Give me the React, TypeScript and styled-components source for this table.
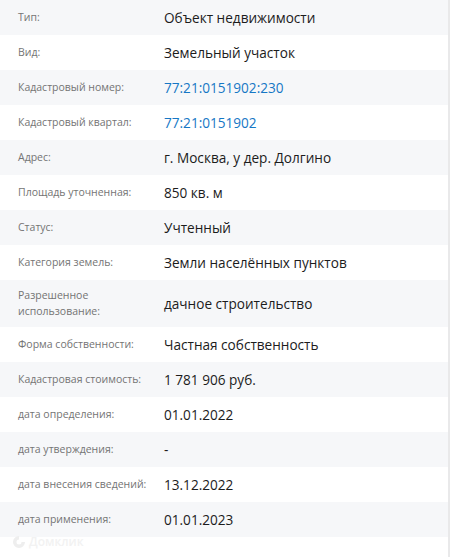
import React from 'react';
import styled, { createGlobalStyle } from 'styled-components';

const GlobalStyle = createGlobalStyle`
    html, body {
        margin: 0;
        padding: 0;
        background: #ffffff;
        font-family: "Open Sans", "Noto Sans", sans-serif;
    }
`;

const Page = styled.div`
    width: 450px;
    height: 557px;
    display: flex;
    overflow: hidden;
    position: relative;
    background: #ffffff;
`;

const Table = styled.div`
    width: 448px;
    display: flex;
    flex-direction: column;
`;

const Edge = styled.div`
    width: 2px;
    background: #e9e9ea;
`;

const Row = styled.div<{ $shaded: boolean; $tall?: boolean }>`
    display: grid;
    grid-template-columns: 164px 1fr;
    align-items: center;
    height: ${p => (p.$tall ? '47px' : '35px')};
    background: ${p => (p.$shaded ? '#f6f7f9' : '#ffffff')};
`;

const Label = styled.div`
    padding-left: 18px;
    padding-right: 8px;
    font-size: 10.5px;
    line-height: 16px;
    color: #747474;
    margin-top: -2px;
`;

const Value = styled.div<{ $link?: boolean }>`
    font-size: 13.6px;
    line-height: 20px;
    color: ${p => (p.$link ? '#1677c5' : '#1c1c1c')};
`;

const Watermark = styled.div`
    position: absolute;
    left: 12px;
    bottom: 7px;
    display: flex;
    align-items: center;
    gap: 3px;
    font-size: 12px;
    font-weight: 600;
    color: #f2f2f2;
`;

interface IField {
    label: string;
    value: string;
    link?: boolean;
    tall?: boolean;
}

const fields: IField[] = [
    { label: 'Тип:', value: 'Объект недвижимости' },
    { label: 'Вид:', value: 'Земельный участок' },
    { label: 'Кадастровый номер:', value: '77:21:0151902:230', link: true },
    { label: 'Кадастровый квартал:', value: '77:21:0151902', link: true },
    { label: 'Адрес:', value: 'г. Москва, у дер. Долгино' },
    { label: 'Площадь уточненная:', value: '850 кв. м' },
    { label: 'Статус:', value: 'Учтенный' },
    { label: 'Категория земель:', value: 'Земли населённых пунктов' },
    { label: 'Разрешенное использование:', value: 'дачное строительство', tall: true },
    { label: 'Форма собственности:', value: 'Частная собственность' },
    { label: 'Кадастровая стоимость:', value: '1 781 906 руб.' },
    { label: 'дата определения:', value: '01.01.2022' },
    { label: 'дата утверждения:', value: '-' },
    { label: 'дата внесения сведений:', value: '13.12.2022' },
    { label: 'дата применения:', value: '01.01.2023' },
];

const App = () => (
    <Page>
        <GlobalStyle />
        <Table>
            {fields.map((f, i) => (
                <Row key={f.label} $shaded={i % 2 === 0} $tall={f.tall}>
                    <Label>{f.label}</Label>
                    <Value $link={f.link}>{f.value}</Value>
                </Row>
            ))}
        </Table>
        <Edge />
        <Watermark>
            <svg width="14" height="14" viewBox="0 0 14 14">
                <path d="M7 1a6 6 0 1 0 6 6h-3.5A2.5 2.5 0 1 1 7 4.5z" fill="#eeeeee" />
            </svg>
            Домклик
        </Watermark>
    </Page>
);

export default App;
